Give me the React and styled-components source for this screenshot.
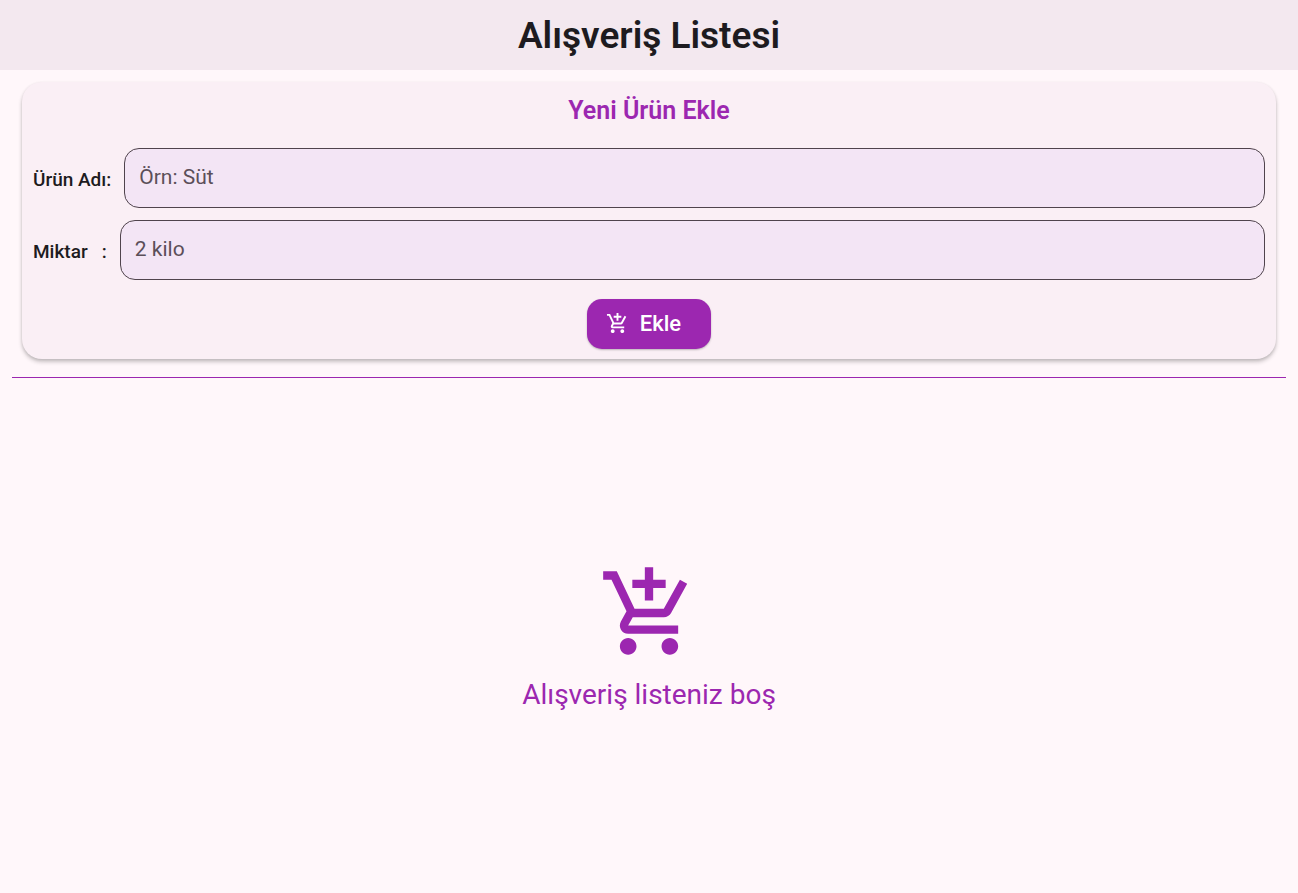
import React from "react";
import styled, { createGlobalStyle } from "styled-components";

const GlobalStyle = createGlobalStyle`
  *, *::before, *::after { box-sizing: border-box; }
  body {
    margin: 0;
    background: #fff7fa;
    color: #1d1b20;
    font-family: Roboto, "Liberation Sans", sans-serif;
  }
`;

const Page = styled.div`
  display: flex;
  flex-direction: column;
  min-height: 100vh;
`;

const AppBar = styled.header`
  display: flex;
  align-items: center;
  justify-content: center;
  height: 70px;
  padding-top: 2px;
  background: #f3e8ef;
`;

const PageTitle = styled.h1`
  margin: 0;
  font-size: 37px;
  line-height: 48px;
  font-weight: 600;
`;

const Content = styled.main`
  display: flex;
  flex: 1;
  flex-direction: column;
  padding: 12px;
`;

const Card = styled.form`
  display: flex;
  flex-direction: column;
  align-items: center;
  margin: 0 10px;
  padding: 10px 11px;
  border-radius: 20px;
  background: #faeff5;
  box-shadow: 0 1px 3px rgba(0, 0, 0, 0.1), 0 3px 4px rgba(0, 0, 0, 0.2);
`;

const CardTitle = styled.h2`
  margin: 0 0 18px;
  font-size: 25px;
  line-height: 38px;
  font-weight: 600;
  color: #9c27b0;
`;

const Fields = styled.div`
  display: flex;
  flex-direction: column;
  gap: 12px;
  width: 100%;
  margin-bottom: 19px;
`;

const FieldRow = styled.div`
  display: flex;
  align-items: center;
  gap: 13px;
`;

const Label = styled.label`
  padding-top: 4px;
  font-size: 19px;
  line-height: 24px;
  font-weight: 500;
  white-space: pre;
`;

const TextInput = styled.input`
  flex: 1;
  min-width: 0;
  height: 60px;
  padding: 0 14px 2px;
  border: 1px solid #4f434c;
  border-radius: 15px;
  outline: none;
  background: #f3e5f5;
  color: #1d1b20;
  font: inherit;
  font-size: 21px;

  &::placeholder {
    color: #5b4f59;
    opacity: 1;
  }
  &:focus {
    border-color: #9c27b0;
  }
`;

const AddButton = styled.button`
  display: flex;
  align-items: center;
  gap: 11px;
  height: 50px;
  padding: 0 30px 2px 19px;
  border: 0;
  border-radius: 15px;
  background: #9c27b0;
  box-shadow: 0 1px 2px rgba(0, 0, 0, 0.25);
  color: #fff;
  font: inherit;
  font-size: 22px;
  font-weight: 500;
  cursor: pointer;
`;

const Divider = styled.hr`
  width: 100%;
  height: 1px;
  margin: 18px 0 0;
  border: 0;
  background: #9c27b0;
`;

const EmptyState = styled.section`
  display: flex;
  flex: 1;
  flex-direction: column;
  align-items: center;
  justify-content: center;
  gap: 13px;
  padding-top: 18px;
  color: #9c27b0;
`;

const EmptyText = styled.p`
  margin: 0;
  font-size: 28px;
  line-height: 38px;
`;

function CartPlusIcon({ size }) {
  return (
    <svg width={size} height={size} viewBox="0 0 24 24" fill="currentColor" aria-hidden="true">
      <path d="M11 9h2V6h3V4h-3V1h-2v3H8v2h3v3zm-4 9c-1.1 0-1.99.9-1.99 2S5.9 22 7 22s2-.9 2-2-.9-2-2-2zm10 0c-1.1 0-1.99.9-1.99 2s.89 2 1.99 2 2-.9 2-2-.9-2-2-2zm-8.9-5h7.45c.75 0 1.41-.41 1.75-1.03l3.86-7.01L19.42 4l-3.87 7H8.53L4.27 2H1v2h2l3.6 7.59-1.35 2.44C4.52 15.37 5.48 17 7 17h12v-2H7l1.1-2z" />
    </svg>
  );
}

export default function App() {
  return (
    <Page>
      <GlobalStyle />
      <AppBar>
        <PageTitle>Alışveriş Listesi</PageTitle>
      </AppBar>
      <Content>
        <Card onSubmit={(event) => event.preventDefault()}>
          <CardTitle>Yeni Ürün Ekle</CardTitle>
          <Fields>
            <FieldRow>
              <Label htmlFor="product-name">Ürün Adı:</Label>
              <TextInput id="product-name" type="text" placeholder="Örn: Süt" />
            </FieldRow>
            <FieldRow>
              <Label htmlFor="product-amount">{"Miktar   :"}</Label>
              <TextInput id="product-amount" type="text" placeholder="2 kilo" />
            </FieldRow>
          </Fields>
          <AddButton type="submit">
            <CartPlusIcon size={23} />
            Ekle
          </AddButton>
        </Card>
        <Divider />
        <EmptyState>
          <CartPlusIcon size={100} />
          <EmptyText>Alışveriş listeniz boş</EmptyText>
        </EmptyState>
      </Content>
    </Page>
  );
}
